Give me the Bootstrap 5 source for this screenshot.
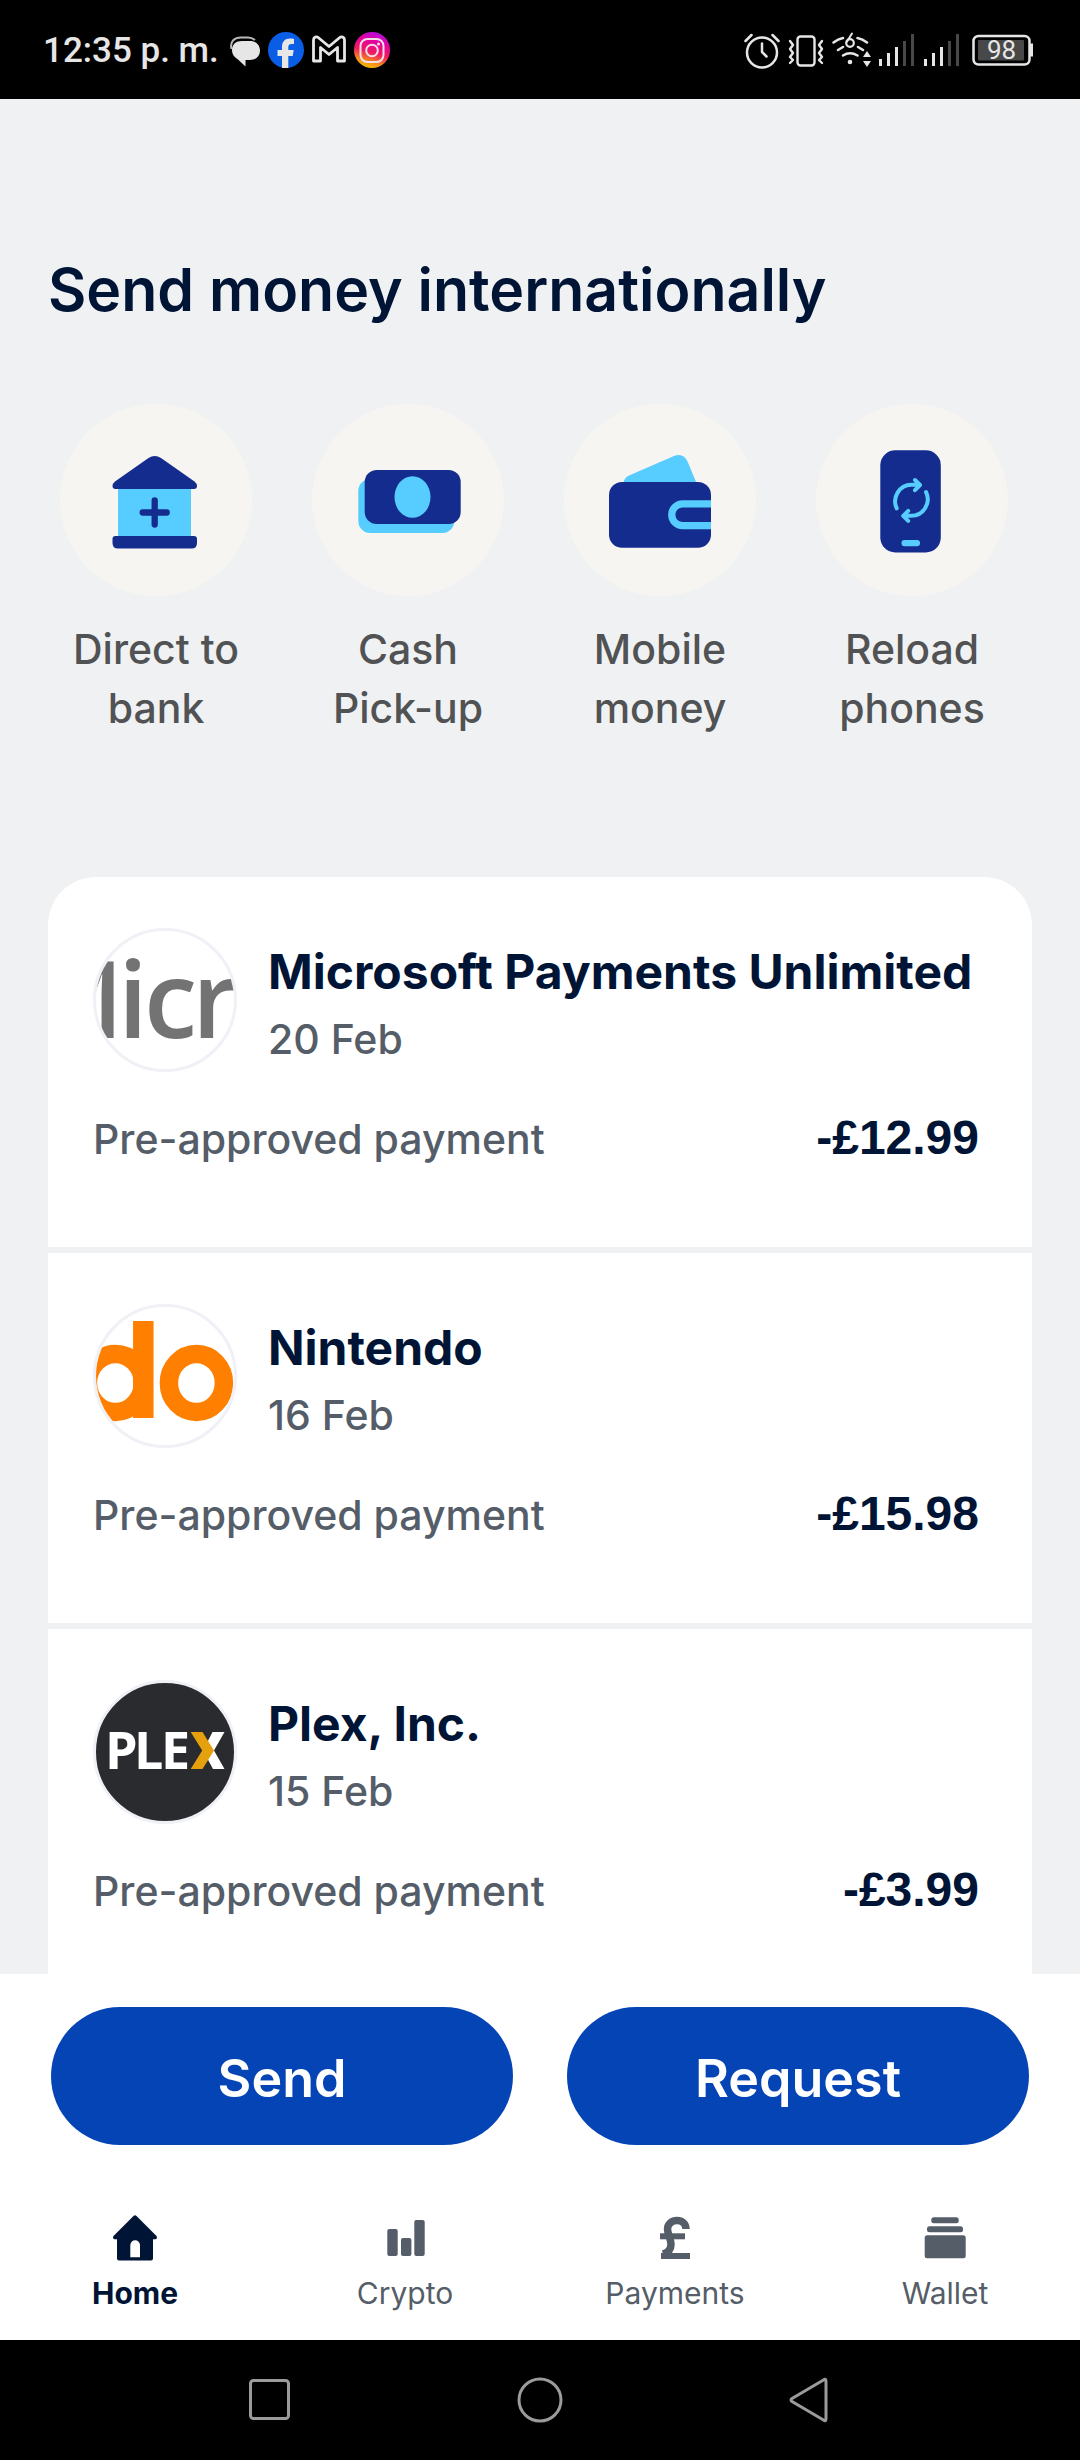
<!DOCTYPE html>
<html lang="en">
<head>
<meta charset="utf-8">
<meta name="viewport" content="width=device-width, initial-scale=1">
<title>Home</title>
<link href="https://cdn.jsdelivr.net/npm/bootstrap@5.3.0/dist/css/bootstrap.min.css" rel="stylesheet">
<style>
  :root { --ink: #001435; --muted: #545d68; --blue: #0544b5; --surface: #f0f1f3; }
  body { font-family: Inter, "Liberation Sans", sans-serif; color: var(--ink); background: var(--surface); }
  svg { display: block; flex: none; }
  .status-bar { height: 99px; padding: 0 47px 0 43px; color: #e6e6e6; font: 500 35px/40px Roboto, sans-serif; }
  .status-left { gap: 8px; }
  .status-right { gap: 8px; }
  .status-time { margin-right: 3px; padding-top: 2px; }
  .feed { padding: 155px 0 0; scrollbar-width: none; }
  .feed::-webkit-scrollbar { display: none; }
  .feed-title { font-size: 59px; line-height: 72px; font-weight: 600; margin: 0 48px 78px; }
  .shortcuts { padding: 0 42px 0 30px; margin-bottom: 139px; }
  .shortcut { color: #515254; font-size: 41px; line-height: 59px; font-weight: 450; gap: 24px; }
  .shortcut-icon { width: 192px; height: 192px; background: #f6f5f1; }
  .shortcut-label { width: 192px; }
  .activity { margin: 0 48px; border-radius: 48px 48px 0 0; gap: 6px; }
  .activity-row { padding: 51px 53px 83px 45px; background: #fff; }
  .activity-head { gap: 31px; margin-bottom: 41px; }
  .activity-name { font-size: 48px; line-height: 58px; font-weight: 700; margin: 15px 0 13px; }
  .activity-note { font-size: 41px; line-height: 50px; font-weight: 450; color: var(--muted); margin: 0; }
  .activity-amount { font: 700 48px/50px "Liberation Sans", sans-serif; }
  .avatar { width: 144px; height: 144px; }
  .dock { background: #fff; padding-top: 33px; }
  .dock-actions { padding: 0 51px; gap: 54px; margin-bottom: 70px; }
  .btn-pay { --bs-btn-color: #fff; --bs-btn-bg: var(--blue); --bs-btn-hover-color: #fff; --bs-btn-hover-bg: #043a9c;
    --bs-btn-active-color: #fff; --bs-btn-active-bg: #03307f; --bs-btn-font-weight: 600;
    font-size: 52px; line-height: 64px; padding: 40px 20px 34px; }
  .tab { color: var(--muted); font-size: 30px; line-height: 36px; gap: 14px; padding-bottom: 29px; }
  .tab.active { color: var(--ink); font-weight: 700; }
  .system-bar { height: 120px; padding: 0 135px; }
  .system-bar button { color: #9b9b9b; }
</style>
</head>
<body>
<div class="d-flex flex-column vh-100">

  <header class="status-bar bg-black d-flex flex-shrink-0 align-items-center justify-content-between">
    <div class="status-left d-flex align-items-center">
      <span class="status-time">12:35 p. m.</span>
      <!-- messages -->
      <svg width="30" height="36" viewBox="0 0 30 36" aria-hidden="true">
        <path d="M1.500 17C-.5 9 5 5.500 11 5.500h7c3 0 5 1 7 2.500" fill="none" stroke="#b9b9b9" stroke-width="2"/>
        <path d="M12 9h8c6 0 10 4 10 9.500s-4 9.500-10 9.500h-4.500v6.500L8 27.500C4 25 2 22 2 18.500 2 12 6 9 12 9z" fill="#e6e6e6"/>
      </svg>
      <!-- facebook -->
      <svg width="36" height="36" viewBox="0 0 36 36" aria-hidden="true">
        <circle cx="18" cy="18" r="18" fill="#0a5ee6"/>
        <path d="M14 36V24H9.500v-6H14v-3c0-5.500 3-8.500 8-8.500 1.500 0 3 .2 4 .4v5h-2.500c-2.500 0-3.200 1.400-3.200 3.200V18h5.400l-1 6h-4.400v12z" fill="#e6e6e6"/>
      </svg>
      <!-- mail -->
      <svg width="34" height="36" viewBox="0 0 34 36" aria-hidden="true">
        <path d="M1.500 29V8c0-3 3-4 5-2.300L17 14.500 27.500 5.700C29.500 4 32.500 5 32.500 8v21h-7V15.500L17 22.500 8.500 15.500V29z" fill="none" stroke="#e6e6e6" stroke-width="2.800" stroke-linejoin="round"/>
      </svg>
      <!-- instagram -->
      <svg width="36" height="36" viewBox="0 0 36 36" aria-hidden="true">
        <defs>
          <linearGradient id="ig" x1="0.300" y1="1" x2="0.600" y2="0">
            <stop offset="0" stop-color="#f5c400"/><stop offset=".2" stop-color="#f58a1c"/><stop offset=".45" stop-color="#f01a62"/><stop offset=".75" stop-color="#e300a0"/><stop offset="1" stop-color="#b50fe0"/>
          </linearGradient>
        </defs>
        <circle cx="18" cy="18" r="18" fill="url(#ig)"/>
        <g fill="none" stroke="#f3dfe8" stroke-width="2"><rect x="6.500" y="7" width="23" height="23" rx="7"/><circle cx="18" cy="18.500" r="5.800"/></g>
        <circle cx="24.500" cy="12" r="1.500" fill="#f3dfe8"/>
      </svg>
    </div>
    <div class="status-right d-flex align-items-center">
      <!-- alarm -->
      <svg width="36" height="38" viewBox="0 0 36 38" fill="none" stroke="#e6e6e6" stroke-width="2.500" stroke-linecap="round" stroke-linejoin="round" aria-hidden="true">
        <circle cx="18" cy="21.500" r="15"/><path d="M18 12.500V21l4.500 4.500M1.500 10l6-6M34.500 10l-6-6"/>
      </svg>
      <!-- vibrate -->
      <svg width="36" height="36" viewBox="0 0 36 36" fill="none" stroke="#e6e6e6" stroke-width="2.400" stroke-linecap="round" stroke-linejoin="round" aria-hidden="true">
        <rect x="9.500" y="4.500" width="17" height="29" rx="3"/>
        <path d="M2 9l3 4-3 4 3 4-3 4 3 3-3 3M34 9l-3 4 3 4-3 4 3 4-3 3 3 3"/>
      </svg>
      <!-- wifi 6 -->
      <svg width="39" height="36" viewBox="0 0 39 36" fill="none" stroke="#e6e6e6" stroke-width="2.500" stroke-linecap="round" aria-hidden="true">
        <path d="M1.500 10.500Q6 7 11 6M35 10.500Q30.500 7 25.500 6M6 18l5-3M31 18l-5-3M11 23.500Q18 19 25.500 23.500"/>
        <path d="M20 1.500l-5 8" stroke-width="2"/><circle cx="18" cy="11" r="3.800" stroke-width="2.200"/>
        <g fill="#e6e6e6" stroke="none"><circle cx="18" cy="30" r="2.300"/><path d="M35 19l4 6h-8zM35 35l4-6h-8z"/></g>
      </svg>
      <!-- mobile signal, two lines -->
      <svg width="81" height="36" viewBox="0 0 81 36" class="me-1" stroke-width="3" aria-hidden="true">
        <path d="M1.500 34v-7M9.500 34V21M17.500 34V15M46.500 34v-7M54.500 34V21M62.500 34V15" stroke="#e6e6e6"/>
        <path d="M25.500 34V9M33.500 34V2M70.500 34V9M78.500 34V2" stroke="#484848"/>
      </svg>
      <!-- battery -->
      <svg width="61" height="36" viewBox="0 0 61 36" role="img" aria-label="Battery 98">
        <rect x="1.500" y="4" width="56" height="28.500" rx="5" fill="none" stroke="#e6e6e6" stroke-width="2.500"/>
        <rect x="6" y="8" width="46" height="20.500" rx="1" fill="#484848"/>
        <path d="M58 11.500h3v13h-3z" fill="#e6e6e6"/>
        <text x="29.500" y="27" text-anchor="middle" font-size="26" font-weight="400" fill="#e6e6e6">98</text>
      </svg>
    </div>
  </header>

  <main class="feed flex-grow-1 overflow-auto">
    <h1 class="feed-title">Send money internationally</h1>

    <nav class="shortcuts d-flex" aria-label="Send money options">
      <a href="#" class="shortcut col-3 d-flex flex-column align-items-center text-center text-decoration-none">
        <span class="shortcut-icon rounded-circle">
          <svg width="192" height="192" viewBox="0 0 192 192" aria-hidden="true">
            <path d="M58 84h73v49H58z" fill="#57ccff"/>
            <path d="M88.500 54Q94.700 50 101 54L134.500 77.500Q137 79.500 137 82 137 85 134 85H55.500Q52.500 85 52.500 82 52.500 79.500 55 77.500zM55.500 132H134q3 0 3 3v4q0 5.500-5.500 5.500H58q-5.500 0-5.500-5.500v-4q0-3 3-3z" fill="#142c8e"/>
            <path d="M94.700 96.500v24M82.700 108.500h24" stroke="#142c8e" stroke-width="6.300" stroke-linecap="round"/>
          </svg>
        </span>
        <span class="shortcut-label">Direct to bank</span>
      </a>
      <a href="#" class="shortcut col-3 d-flex flex-column align-items-center text-center text-decoration-none">
        <span class="shortcut-icon rounded-circle">
          <svg width="192" height="192" viewBox="0 0 192 192" aria-hidden="true">
            <rect x="46.300" y="75" width="96" height="54" rx="12" fill="#57ccff"/>
            <rect x="52.700" y="66" width="96" height="54" rx="12" fill="#142c8e"/>
            <ellipse cx="100.500" cy="93" rx="18" ry="20.800" fill="#57ccff"/>
          </svg>
        </span>
        <span class="shortcut-label">Cash Pick-up</span>
      </a>
      <a href="#" class="shortcut col-3 d-flex flex-column align-items-center text-center text-decoration-none">
        <span class="shortcut-icon rounded-circle">
          <svg width="192" height="192" viewBox="0 0 192 192" aria-hidden="true">
            <path d="M59.500 79q.5-5 5-7.200L110 52q9-3.500 13.500 5.500L132.500 79z" fill="#57ccff"/>
            <rect x="45" y="78" width="102" height="65.700" rx="13" fill="#142c8e"/>
            <path d="M147 99.800h-28.300a10.950 10.950 0 0 0 0 21.900H147" fill="none" stroke="#57ccff" stroke-width="7.300"/>
          </svg>
        </span>
        <span class="shortcut-label">Mobile money</span>
      </a>
      <a href="#" class="shortcut col-3 d-flex flex-column align-items-center text-center text-decoration-none">
        <span class="shortcut-icon rounded-circle">
          <svg width="192" height="192" viewBox="0 0 192 192" aria-hidden="true">
            <rect x="64.300" y="46.300" width="60.500" height="102.200" rx="15" fill="#142c8e"/>
            <g fill="none" stroke="#57ccff" stroke-width="4" stroke-linecap="round" stroke-linejoin="round">
              <path d="M80.700 104.300A16.500 16.500 0 0 1 95.300 80.800H102M99 76l5 5-5 5.200"/>
              <path d="M110 88A16.500 16.500 0 0 1 95.300 111.800H89M92.200 106.800l-5 5 5 5"/>
            </g>
            <rect x="85.500" y="136" width="18.500" height="6.300" rx="3" fill="#57ccff"/>
          </svg>
        </span>
        <span class="shortcut-label">Reload phones</span>
      </a>
    </nav>

    <section class="activity d-flex flex-column overflow-hidden" aria-label="Recent activity">
      <article class="activity-row">
        <div class="activity-head d-flex">
          <svg class="avatar" viewBox="0 0 144 144" role="img" aria-label="Microsoft logo">
            <defs><clipPath id="disc"><circle cx="72" cy="72" r="69"/></clipPath></defs>
            <circle cx="72" cy="72" r="70.500" fill="#fff" stroke="#f0f1f6" stroke-width="3"/>
            <g clip-path="url(#disc)">
              <text x="-68 25 51 99" y="110" font-family="'Open Sans', sans-serif" font-weight="600" font-size="107" fill="#737373">Micr</text>
            </g>
          </svg>
          <div>
            <h2 class="activity-name">Microsoft Payments Unlimited</h2>
            <p class="activity-note">20 Feb</p>
          </div>
        </div>
        <div class="d-flex justify-content-between align-items-baseline">
          <p class="activity-note">Pre-approved payment</p>
          <span class="activity-amount">-£12.99</span>
        </div>
      </article>

      <article class="activity-row">
        <div class="activity-head d-flex">
          <svg class="avatar" viewBox="0 0 144 144" role="img" aria-label="Nintendo logo">
            <circle cx="72" cy="72" r="70.500" fill="#fff" stroke="#f0f1f6" stroke-width="3"/>
            <g clip-path="url(#disc)" fill="none" stroke="#ff7f00">
              <ellipse cx="22.400" cy="79" rx="27.500" ry="29" stroke-width="18.500"/>
              <ellipse cx="103.400" cy="79" rx="27.500" ry="29" stroke-width="18.500"/>
              <path d="M50.300 17v97" stroke-width="20.500"/>
            </g>
          </svg>
          <div>
            <h2 class="activity-name">Nintendo</h2>
            <p class="activity-note">16 Feb</p>
          </div>
        </div>
        <div class="d-flex justify-content-between align-items-baseline">
          <p class="activity-note">Pre-approved payment</p>
          <span class="activity-amount">-£15.98</span>
        </div>
      </article>

      <article class="activity-row">
        <div class="activity-head d-flex">
          <svg class="avatar" viewBox="0 0 144 144" role="img" aria-label="Plex logo">
            <circle cx="72" cy="72" r="70.500" fill="#2a2b2e" stroke="#f0f1f6" stroke-width="3"/>
            <text x="12 41 68" y="89" font-family="'Open Sans', sans-serif" font-weight="700" font-size="52" fill="#fff">PLE</text>
            <path d="M119.500 52h12L121 70.500l10.500 18.500h-11.500L110 70.500z" fill="#fff"/>
            <path d="M97.700 52h11.800L121 70.500 109.500 89H97.700l11.500-18.500z" fill="#e5a00d"/>
          </svg>
          <div>
            <h2 class="activity-name">Plex, Inc.</h2>
            <p class="activity-note">15 Feb</p>
          </div>
        </div>
        <div class="d-flex justify-content-between align-items-baseline">
          <p class="activity-note">Pre-approved payment</p>
          <span class="activity-amount">-£3.99</span>
        </div>
      </article>
    </section>
  </main>

  <footer class="dock flex-shrink-0">
    <div class="dock-actions d-flex">
      <button type="button" class="btn btn-pay rounded-pill border-0 flex-fill w-50">Send</button>
      <button type="button" class="btn btn-pay rounded-pill border-0 flex-fill w-50">Request</button>
    </div>
    <nav class="d-flex" aria-label="Main">
      <a href="#" class="tab active col-3 d-flex flex-column align-items-center text-decoration-none" aria-current="page">
        <svg width="46" height="46" viewBox="0 0 46 46" aria-hidden="true">
          <path fill-rule="evenodd" d="M21.500 1q1.500-1.300 3 0L44.500 21q1.300 2-.8 3.200H41V43.500q0 2-2 2H7q-2 0-2-2V24.200H2.300Q.2 23 1.500 21zM18.300 42.300H28V30.200a4.850 4.850 0 0 0-9.700 0z" fill="currentColor"/>
        </svg>
        <span>Home</span>
      </a>
      <a href="#" class="tab col-3 d-flex flex-column align-items-center text-decoration-none">
        <svg width="46" height="46" viewBox="0 0 46 46" fill="currentColor" aria-hidden="true">
          <rect x="5.300" y="14" width="10.400" height="27" rx="2"/><rect x="19" y="23" width="10.400" height="18" rx="2"/><rect x="32.300" y="5" width="10.400" height="36" rx="2"/>
        </svg>
        <span>Crypto</span>
      </a>
      <a href="#" class="tab col-3 d-flex flex-column align-items-center text-decoration-none">
        <!-- pound sign: hook and stem, crossbar, foot -->
        <svg width="46" height="46" viewBox="0 0 46 46" fill="none" stroke="currentColor" aria-hidden="true">
          <path d="M34 14C34 8.500 30 5.500 25 5.500S15.500 9 15.500 14c0 5 3.500 10 3.500 15.500 0 5-3 8-8 9.500" stroke-width="7.500"/>
          <path d="M8 21.300h25" stroke-width="6"/>
          <path d="M9 41h29" stroke-width="6"/>
        </svg>
        <span>Payments</span>
      </a>
      <a href="#" class="tab col-3 d-flex flex-column align-items-center text-decoration-none">
        <svg width="46" height="46" viewBox="0 0 46 46" fill="currentColor" aria-hidden="true">
          <rect x="9.300" y="2.300" width="27.400" height="6" rx="2.500"/><rect x="5" y="11.300" width="36" height="6" rx="2.500"/><rect x="2.700" y="20.300" width="41" height="23" rx="2.500"/>
        </svg>
        <span>Wallet</span>
      </a>
    </nav>
  </footer>

  <div class="system-bar bg-black d-flex flex-shrink-0">
    <button type="button" class="btn border-0 col-4 d-flex align-items-center justify-content-center" aria-label="Recent apps">
      <svg width="46" height="46" viewBox="0 0 46 46" fill="none" stroke="currentColor" stroke-width="3" aria-hidden="true"><rect x="3.500" y="3.500" width="38" height="38" rx="3"/></svg>
    </button>
    <button type="button" class="btn border-0 col-4 d-flex align-items-center justify-content-center" aria-label="Home screen">
      <svg width="46" height="46" viewBox="0 0 46 46" fill="none" stroke="currentColor" stroke-width="3" aria-hidden="true"><circle cx="23" cy="23" r="21"/></svg>
    </button>
    <button type="button" class="btn border-0 col-4 d-flex align-items-center justify-content-center" aria-label="Back">
      <svg width="46" height="46" viewBox="0 0 46 46" fill="none" stroke="currentColor" stroke-width="3" stroke-linejoin="round" aria-hidden="true"><path d="M39 4.500Q39 1 36.500 3L5 21.500Q3 23 5 24.500L36.500 43Q39 45 39 41.500z"/></svg>
    </button>
  </div>

</div>
<script src="https://cdn.jsdelivr.net/npm/bootstrap@5.3.0/dist/js/bootstrap.bundle.min.js"></script>
</body>
</html>
